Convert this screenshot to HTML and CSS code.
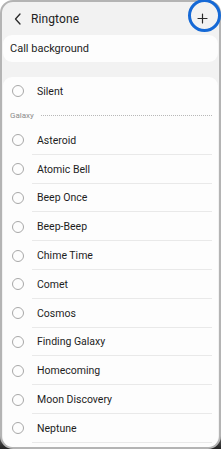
FILE: index.html
```html
<!DOCTYPE html>
<html>
<head>
<meta charset="utf-8">
<link rel="stylesheet" href="styles.css">
</head>
<body>
<div class="screen">
  <header class="topbar">
    <svg class="back" width="10" height="12" viewBox="0 0 10 12"><path d="M7 1 L2.5 6 L7 11" fill="none" stroke="#2a2a2a" stroke-width="1.3" stroke-linecap="round" stroke-linejoin="round"/></svg>
    <span class="title">Ringtone</span>
    <svg class="plus" width="11" height="11" viewBox="0 0 11 11"><path d="M5.5 1 V10 M1 5.5 H10" stroke="#2a2a2a" stroke-width="1.2" stroke-linecap="round"/></svg>
  </header>
  <div class="card single">Call background</div>
  <div class="card list">
    <div class="row first"><span class="radio"></span><span class="label">Silent</span></div>
    <div class="section"><span class="sec-title">Galaxy</span><span class="dots"></span></div>
    <div class="row"><span class="radio"></span><span class="label">Asteroid</span></div>
    <div class="row"><span class="radio"></span><span class="label">Atomic Bell</span></div>
    <div class="row"><span class="radio"></span><span class="label">Beep Once</span></div>
    <div class="row"><span class="radio"></span><span class="label">Beep-Beep</span></div>
    <div class="row"><span class="radio"></span><span class="label">Chime Time</span></div>
    <div class="row"><span class="radio"></span><span class="label">Comet</span></div>
    <div class="row"><span class="radio"></span><span class="label">Cosmos</span></div>
    <div class="row"><span class="radio"></span><span class="label">Finding Galaxy</span></div>
    <div class="row"><span class="radio"></span><span class="label">Homecoming</span></div>
    <div class="row"><span class="radio"></span><span class="label">Moon Discovery</span></div>
    <div class="row"><span class="radio"></span><span class="label">Neptune</span></div>
  </div>
</div>
<div class="highlight"></div>
</body>
</html>
```

FILE: styles.css
```css
html, body {
  margin: 0;
  padding: 0;
}
body {
  width: 221px;
  height: 449px;
  position: relative;
  overflow: hidden;
  background: linear-gradient(to bottom, #ffffff 0, #ffffff 88%, #777777 96%, #222222 100%);
  font-family: Roboto, "Liberation Sans", sans-serif;
  color: #1e1e1e;
}
.screen {
  box-sizing: border-box;
  width: 221px;
  height: 449px;
  border: 2px solid #b4b4b4;
  border-radius: 13px;
  background: #f2f2f2;
  overflow: hidden;
  display: flex;
  flex-direction: column;
  padding: 0 1px;
}
.topbar {
  height: 33px;
  display: flex;
  align-items: center;
  padding-left: 10px;
  padding-right: 8px;
  flex-shrink: 0;
}
.back {
  margin-right: 8px;
  margin-top: 1px;
}
.title {
  font-size: 12px;
  color: #222;
  flex: 1;
  letter-spacing: 0.1px;
}
.plus {
  margin-right: 2px;
}
.card {
  background: #fdfdfd;
  border-radius: 9px;
  flex-shrink: 0;
}
.single {
  height: 27px;
  display: flex;
  align-items: center;
  padding-left: 7px;
  font-size: 11px;
  color: #1e1e1e;
  margin-bottom: 15px;
}
.list {
  flex: 1;
  padding: 0 6px 0 0;
}
.row {
  height: 28.8px;
  display: flex;
  align-items: center;
  position: relative;
}
.row.first {
  height: 28px;
}
.row::after {
  content: "";
  position: absolute;
  left: 29px;
  right: 0;
  bottom: 0;
  border-bottom: 1px solid #e9e9e9;
}
.row.first::after {
  display: none;
}
.radio {
  box-sizing: border-box;
  width: 12px;
  height: 12px;
  border: 1px solid #a8a8a8;
  border-radius: 50%;
  margin-left: 9px;
  margin-right: 13px;
  flex-shrink: 0;
}
.label {
  font-size: 10.5px;
  color: #1e1e1e;
}
.section {
  height: 21px;
  display: flex;
  align-items: center;
  padding-left: 7px;
}
.sec-title {
  font-size: 8px;
  color: #8c8c8c;
  margin-right: 7px;
}
.dots {
  flex: 1;
  border-top: 1px dotted #b8b8b8;
}
.highlight {
  position: absolute;
  left: 188px;
  top: -1px;
  width: 33px;
  height: 33px;
  box-sizing: border-box;
  border: 3px solid #1569d6;
  border-radius: 50%;
}
```
